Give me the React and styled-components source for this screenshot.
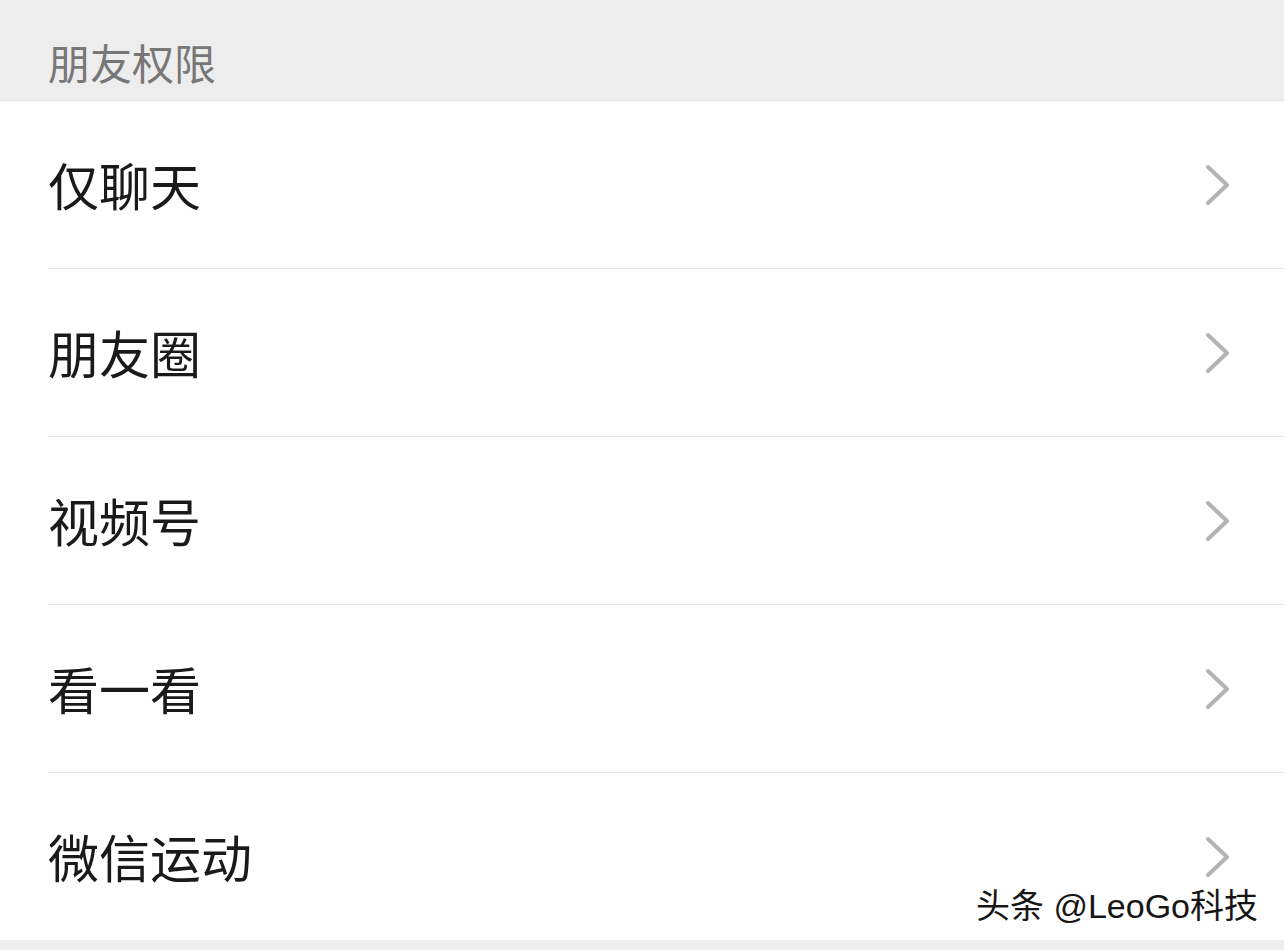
import React from 'react';
import styled, { createGlobalStyle } from 'styled-components';

const GlobalStyle = createGlobalStyle`
  html, body {
    margin: 0;
    padding: 0;
    background: #ededed;
  }
  body {
    font-family: "Noto Sans CJK SC", "Noto Sans", sans-serif;
  }
`;

const Page = styled.div`
  position: relative;
  width: 1284px;
  height: 950px;
  background: #ededed;
  overflow: hidden;
`;

const SectionHeader = styled.div`
  height: 101px;
  box-sizing: border-box;
  padding: 22px 0 0 48px;
  display: flex;
  align-items: center;
  font-size: 42px;
  color: #777777;
  border-bottom: 1px solid #e3e3e3;
`;

const List = styled.div`
  background: #ffffff;
`;

const Row = styled.div`
  padding-left: 48px;
`;

const RowInner = styled.div`
  height: 167px;
  display: flex;
  align-items: center;
  justify-content: space-between;
  padding-right: 53px;
  border-bottom: ${(p) => (p.$last ? 'none' : '1px solid #e5e5e5')};
`;

const Label = styled.span`
  font-size: 51px;
  color: #1a1a1a;
  line-height: 1;
`;

const Watermark = styled.div`
  position: absolute;
  right: 26px;
  bottom: 22px;
  font-family: "Liberation Sans", "Noto Sans CJK SC", sans-serif;
  font-size: 34px;
  color: #161616;
  text-shadow: 1px 1px 0 #ffffff, -1px -1px 0 #ffffff, 1px -1px 0 #ffffff, -1px 1px 0 #ffffff;
`;

const Chevron = () => (
  <svg width="26" height="42" viewBox="0 0 26 42">
    <path
      d="M3 3 L22 21 L3 39"
      fill="none"
      stroke="#b3b3b3"
      strokeWidth="4"
      strokeLinecap="round"
      strokeLinejoin="round"
    />
  </svg>
);

const items = ['仅聊天', '朋友圈', '视频号', '看一看', '微信运动'];

const App = () => (
  <Page>
    <GlobalStyle />
    <SectionHeader>朋友权限</SectionHeader>
    <List>
      {items.map((item, i) => (
        <Row key={item}>
          <RowInner $last={i === items.length - 1}>
            <Label>{item}</Label>
            <Chevron />
          </RowInner>
        </Row>
      ))}
    </List>
    <Watermark>头条 @LeoGo科技</Watermark>
  </Page>
);

export default App;
